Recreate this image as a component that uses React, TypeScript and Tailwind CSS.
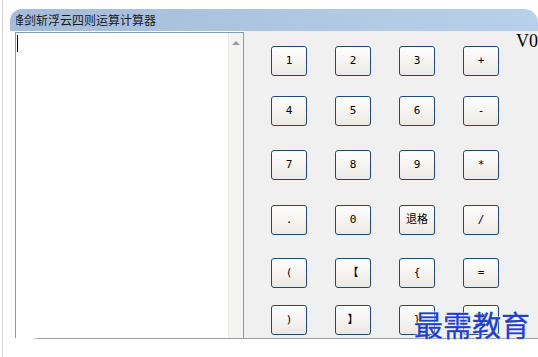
const rows: string[][] = [
  ["1", "2", "3", "+"],
  ["4", "5", "6", "-"],
  ["7", "8", "9", "*"],
  [".", "0", "退格", "/"],
  ["(", "【", "{", "="],
  [")", "】", "}", "清"],
];

const rowMargins = ["mt-[15px]", "mt-[20px]", "mt-[24px]", "mt-[25px]", "mt-[23px]", "mt-[17px]"];

function CalcButton({ label }: { label: string }) {
  return (
    <button className="w-[36px] h-[30px] rounded-[3px] border border-[#1c4a7c] bg-gradient-to-b from-white to-[#ebe9e3] text-[11px] text-black flex items-center justify-center font-['DejaVu_Sans_Mono','Noto_Sans_CJK_SC',monospace]">
      {label}
    </button>
  );
}

export default function App() {
  return (
    <div className="relative w-[538px] h-[357px] bg-white overflow-hidden">
      <div className="absolute left-[2px] top-0 h-full w-px bg-[#d4d4d4]" />

      <div className="ml-[10px] mt-[9px] w-[528px] h-[330px] flex flex-col border-b border-[#a0a0a0] rounded-bl-[30px]">
        {/* Title bar */}
        <div className="h-[22px] rounded-tl-[12px] rounded-tr-[14px] bg-gradient-to-r from-[#a4bcd9] to-[#b9d0ea] flex items-center pl-[6px]">
          <div className="overflow-hidden">
            <span className="block -ml-[4px] text-[12px] leading-none text-[#1a1a1a] whitespace-nowrap font-['Noto_Sans_CJK_SC',sans-serif]">
              峰剑斩浮云四则运算计算器
            </span>
          </div>
        </div>

        {/* Body */}
        <div className="flex flex-1 min-h-0">
          <div className="w-[5px] bg-white" />

          {/* Text area */}
          <div className="w-[230px] mt-px border border-b-0 border-[#7f9db9] bg-white flex">
            <div className="flex-1 pl-[1px] pt-[2px]">
              <div className="w-px h-[17px] bg-black" />
            </div>
            <div className="w-[15px] bg-[#f3f3f1] border-l border-[#ececec] flex justify-center pt-[8px]">
              <div className="w-0 h-0 border-l-[4px] border-r-[4px] border-b-[4px] border-l-transparent border-r-transparent border-b-[#9a9a9a]" />
            </div>
          </div>

          {/* Buttons */}
          <div className="flex-1 bg-[#f0f0f0] flex">
            <div className="pl-[27px] flex flex-col">
              {rows.map((row, i) => (
                <div key={i} className={`flex gap-[28px] ${rowMargins[i]}`}>
                  {row.map((label) => (
                    <CalcButton key={label} label={label} />
                  ))}
                </div>
              ))}
            </div>
            <div className="ml-[17px] mt-[1px] text-[18px] leading-none text-black font-['Liberation_Serif',serif]">
              V0
            </div>
          </div>
        </div>
      </div>

      {/* Watermark */}
      <div className="absolute left-[414px] top-[310px] text-[29px] leading-none text-[#1d3fd4] font-['Noto_Sans_CJK_SC',sans-serif] [-webkit-text-stroke:0.3px_#1d3fd4] [text-shadow:0_0_2px_white,0_0_2px_white]">
        最需教育
      </div>
    </div>
  );
}
